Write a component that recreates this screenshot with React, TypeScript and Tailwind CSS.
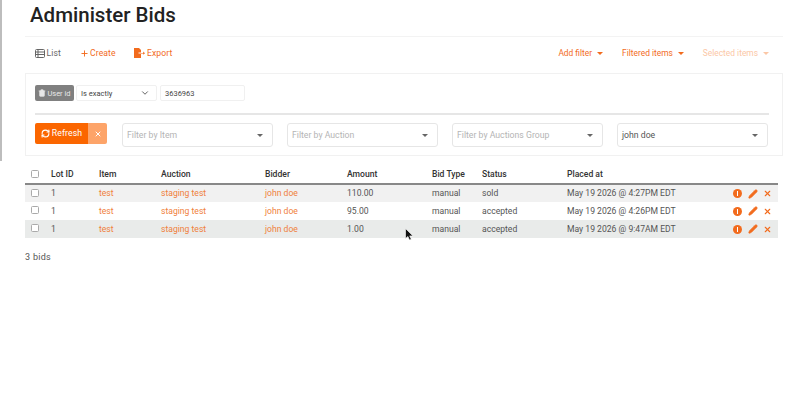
import React from "react";
import { RefreshCw, X, ChevronDown, Plus, Pencil, Trash2 } from "lucide-react";

const rows = [
  { amount: "110.00", status: "sold", at: "May 19 2026 @ 4:27PM EDT", bg: "bg-[#f1f1f1]" },
  { amount: "95.00", status: "accepted", at: "May 19 2026 @ 4:26PM EDT", bg: "bg-white" },
  { amount: "1.00", status: "accepted", at: "May 19 2026 @ 9:47AM EDT", bg: "bg-[#e9ebea]" },
];

function Caret({ className }: { className: string }) {
  return (
    <svg width="6" height="3" viewBox="0 0 6 3" className={className}>
      <path d="M0 0h6L3 3z" fill="currentColor" />
    </svg>
  );
}

function ListIcon() {
  return (
    <svg width="10" height="9" viewBox="0 0 10 9" className="mr-[1.5px]">
      <rect x="0.5" y="0.5" width="9" height="8" rx="1" fill="none" stroke="#666" />
      <path d="M0 3h10M0 5.5h10M3 0v9" stroke="#666" strokeWidth="1" />
    </svg>
  );
}

function FileIcon() {
  return (
    <svg width="11" height="10" viewBox="0 0 11 10" className="mr-[2px]">
      <path d="M0 0h5l2 2v2.5H4.5v1H7V10H0z" fill="#f26b1d" />
      <path d="M7 5h2.2V3.6L11 5.2 9.2 6.8V5.6H7z" fill="#f26b1d" />
    </svg>
  );
}

function FilterSelect({ label, value }: { label?: string; value?: string }) {
  return (
    <div className="w-[151px] h-[24px] border border-[#e6e6e6] rounded-[3px] flex items-center justify-between pl-[4px] pr-[9px]">
      <span className={value ? "pt-[1px] text-[8.7px] text-[#555]" : "pt-[1px] text-[8.7px] text-[#b4b4b4]"}>{value ?? label}</span>
      <Caret className="text-[#666]" />
    </div>
  );
}

export default function App() {
  return (
    <div className="relative w-[800px] h-[416px] overflow-hidden bg-white font-['Roboto',sans-serif] flex">
      <div className="w-[2px] h-[161px] bg-[#bdbdbd] shrink-0" />
      <div className="w-[758px] ml-[23px] shrink-0">
        <div className="h-[37px] border-b border-[#f3f3f3] pl-[5px]">
          <h1 className="text-[20.5px] leading-[30px] font-medium text-[#222]">Administer Bids</h1>
        </div>
        <div className="h-[36px] pb-[3px] flex items-center justify-between pl-[10px] pr-[14px]">
          <div className="flex items-center text-[8.6px] tracking-[0.1px]">
            <span className="flex items-center text-[#666] w-[45px]"><ListIcon />List</span>
            <span className="flex items-center text-[#f26b1d] w-[54px]"><Plus size={9} strokeWidth={2.5} className="mr-[1px]" />Create</span>
            <span className="flex items-center text-[#f26b1d]"><FileIcon />Export</span>
          </div>
          <div className="flex items-center text-[8.4px]">
            <span className="flex items-center text-[#f26b1d] gap-[5px]">Add filter<Caret className="" /></span>
            <span className="flex items-center text-[#f26b1d] gap-[5px] ml-[19px]">Filtered items<Caret className="" /></span>
            <span className="flex items-center text-[#fbc7a6] gap-[5px] ml-[19px]">Selected items<Caret className="" /></span>
          </div>
        </div>
        <div className="h-[83px] border border-[#f1f1f1] pt-[11px] pl-[9px] pr-[8px]">
          <div className="h-[16px] flex items-center text-[7.5px]">
            <span className="w-[39px] h-[16px] bg-[#808080] rounded-[2px] text-[#e8e8e8] flex items-center justify-center">
              <Trash2 size={8} fill="#e8e8e8" className="mr-[1px]" /><span className="pt-[1px]">User id</span>
            </span>
            <span className="ml-[2px] w-[81px] h-[16px] border border-[#f0f0f0] rounded-[2px] flex items-center justify-between pl-[4px] pr-[6px] text-[#444]">
              <span className="pt-[1px]">Is exactly</span><ChevronDown size={10} strokeWidth={2} />
            </span>
            <span className="ml-[3px] w-[85px] h-[16px] border border-[#f0f0f0] rounded-[2px] flex items-center pl-[4px] text-[#444]"><span className="pt-[1px]">3636963</span></span>
          </div>
          <div className="h-[2px] bg-[#e6e6e6] mt-[12px] w-[734px]" />
          <div className="mt-[8px] flex items-start w-[734px]">
            <div className="flex h-[21px] w-[72px] text-[8.7px] tracking-[0.1px] text-white rounded-[2px] overflow-hidden">
              <span className="w-[53px] bg-[#fb6600] flex items-center justify-center"><RefreshCw size={9} strokeWidth={3} className="mr-[2px]" /><span className="pt-[1px]">Refresh</span></span>
              <span className="w-[19px] bg-[#fda469] flex items-center justify-center"><X size={8} strokeWidth={3} /></span>
            </div>
            <div className="ml-[15px] flex gap-[14px]">
              <FilterSelect label="Filter by Item" />
              <FilterSelect label="Filter by Auction" />
              <FilterSelect label="Filter by Auctions Group" />
              <FilterSelect value="john doe" />
            </div>
          </div>
        </div>
        <table className="mt-[9px] w-[753px] table-fixed text-[8.6px] text-[#555] border-collapse">
          <colgroup>
            <col className="w-[26px]" /><col className="w-[48px]" /><col className="w-[62px]" /><col className="w-[104px]" /><col className="w-[82px]" />
            <col className="w-[85px]" /><col className="w-[50px]" /><col className="w-[85px]" /><col className="w-[165px]" /><col className="w-[46px]" />
          </colgroup>
          <thead>
            <tr className="h-[19px] border-b-[2px] border-[#888] text-left text-[#333]">
              <th className="pl-[6px]"><span className="block w-[8px] h-[8px] border border-[#aaa] rounded-[1.5px]" /></th>
              {["Lot ID", "Item", "Auction", "Bidder", "Amount", "Bid Type", "Status", "Placed at", ""].map((h) => (
                <th key={h} className="font-medium pt-[1px]">{h}</th>
              ))}
            </tr>
          </thead>
          <tbody>
            {rows.map((r) => (
              <tr key={r.at} className={`h-[18px] ${r.bg}`}>
                <td className="pl-[6px]"><span className="block w-[8px] h-[8px] border border-[#aaa] rounded-[1.5px] bg-white -mt-[2px]" /></td>
                <td>1</td>
                <td className="text-[#f0803c]">test</td>
                <td className="text-[#f0803c]">staging test</td>
                <td className="text-[#f0803c]">john doe</td>
                <td>{r.amount}</td>
                <td>manual</td>
                <td>{r.status}</td>
                <td>{r.at}</td>
                <td>
                  <span className="flex items-center text-[#f26b1d] pl-[1px]">
                    <span className="w-[9px] h-[9px] rounded-full bg-[#f26b1d] flex items-center justify-center"><span className="w-[1.5px] h-[5px] bg-white" /></span>
                    <Pencil size={10} fill="currentColor" className="ml-[6px]" />
                    <X size={9} strokeWidth={3} className="ml-[5px]" />
                  </span>
                </td>
              </tr>
            ))}
          </tbody>
        </table>
        <div className="mt-[13px] text-[9px] tracking-[0.3px] text-[#555]">3 bids</div>
      </div>
      <svg width="9" height="13" viewBox="0 0 9 13" className="absolute left-[405px] top-[228px]">
        <path d="M0.5 0.5v10l2.4-2 1.6 3.6 1.8-.8-1.6-3.4H8z" fill="#111" stroke="#fff" strokeWidth="0.6" />
      </svg>
    </div>
  );
}
